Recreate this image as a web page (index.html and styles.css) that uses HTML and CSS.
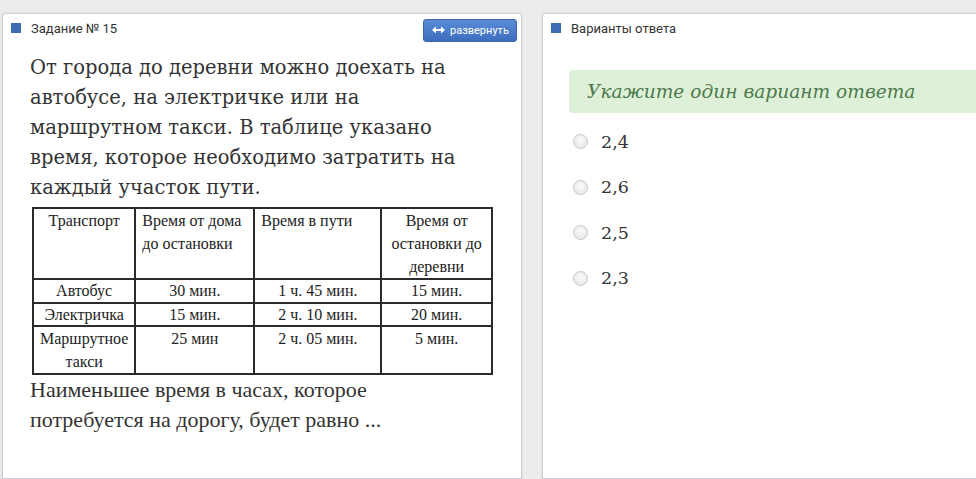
FILE: index.html
```html
<!DOCTYPE html>
<html lang="ru">
<head>
  <meta charset="UTF-8">
  <title>Задание № 15</title>
  <link rel="stylesheet" href="styles.css">
</head>
<body>

  <div class="page">

    <div class="panel task">
      <div class="panel-head">
        <span class="mark"></span>
        <span class="head-title">Задание № 15</span>
        <button class="expand-btn">
          <svg width="13" height="8" viewBox="0 0 13 8"><path d="M0 4 L4 0.5 V3 H9 V0.5 L13 4 L9 7.5 V5 H4 V7.5 Z" fill="#fff"/></svg>
          развернуть
        </button>
      </div>

      <div class="task-body">
        <p class="task-text">От города до деревни можно доехать на автобусе, на электричке или на маршрутном такси. В таблице указано время, которое необходимо затратить на каждый участок пути.</p>

        <table class="route-table">
          <tr class="head-row">
            <td class="c">Транспорт</td>
            <td>Время от дома до остановки</td>
            <td>Время в пути</td>
            <td class="c">Время от остановки до деревни</td>
          </tr>
          <tr class="c">
            <td>Автобус</td>
            <td>30 мин.</td>
            <td>1 ч. 45 мин.</td>
            <td>15 мин.</td>
          </tr>
          <tr class="c">
            <td>Электричка</td>
            <td>15 мин.</td>
            <td>2 ч. 10 мин.</td>
            <td>20 мин.</td>
          </tr>
          <tr class="c">
            <td>Маршрутное такси</td>
            <td>25 мин</td>
            <td>2 ч. 05 мин.</td>
            <td>5 мин.</td>
          </tr>
        </table>

        <p class="task-question">Наименьшее время в часах, которое потребуется на дорогу, будет равно ...</p>
      </div>
    </div>

    <div class="panel answers">
      <div class="panel-head">
        <span class="mark"></span>
        <span class="head-title">Варианты ответа</span>
      </div>

      <div class="answers-body">
        <div class="hint">Укажите один вариант ответа</div>

        <label class="option"><span class="radio"></span>2,4</label>
        <label class="option"><span class="radio"></span>2,6</label>
        <label class="option"><span class="radio"></span>2,5</label>
        <label class="option"><span class="radio"></span>2,3</label>
      </div>
    </div>

  </div>

</body>
</html>
```

FILE: styles.css
```css
body {
  margin: 0;
  background: #ececec;
  font-family: Roboto, "Liberation Sans", sans-serif;
  overflow: hidden;
}

.page {
  display: flex;
  gap: 20px;
  padding: 13px 0 0 2px;
  height: 479px;
  box-sizing: border-box;
}

.panel {
  background: #fff;
  border: 1px solid #c9ccd6;
  border-radius: 3px 3px 0 0;
  box-shadow: 0 0 2px rgba(0, 0, 0, 0.12);
  flex-shrink: 0;
}

.task {
  width: 518px;
}

.answers {
  width: 460px;
}

.panel-head {
  display: flex;
  align-items: center;
  height: 28px;
  padding: 0 4px 0 8px;
}

.mark {
  width: 10px;
  height: 10px;
  background: #3d6cb4;
  margin-right: 10px;
}

.head-title {
  font-size: 13px;
  color: #333;
}

.expand-btn {
  margin-left: auto;
  display: flex;
  align-items: center;
  gap: 5px;
  height: 23px;
  width: 94px;
  padding: 0 0 0 8px;
  margin-top: 4px;
  border: 1px solid #3a66ae;
  border-radius: 3px;
  background: linear-gradient(#5b8cd8, #3d6dbd);
  color: #fff;
  font-family: Roboto, "Liberation Sans", sans-serif;
  font-size: 11px;
}

.task-body {
  padding: 11px 0 0 27px;
  width: 445px;
}

.task-text {
  margin: 0;
  font-family: "DejaVu Serif", serif;
  font-size: 19.5px;
  line-height: 30px;
  color: #333;
}

.route-table {
  border-collapse: collapse;
  margin: 4px 0 0 2px;
  width: 461px;
  font-family: "Liberation Serif", serif;
  font-size: 16px;
  line-height: 23px;
  color: #222;
}

.route-table td {
  border: 2px solid #2b2b2b;
  vertical-align: top;
  padding: 0 6px;
}

.route-table tr.c td {
  text-align: center;
  line-height: 21.5px;
}

.route-table tr.c:last-child td {
  line-height: 23px;
}

.route-table td:nth-child(1) { width: 88px; }
.route-table td:nth-child(2) { width: 105px; }
.route-table td:nth-child(3) { width: 113px; }

.route-table .c {
  text-align: center;
}

.task-question {
  margin: 0;
  font-family: "Liberation Serif", serif;
  font-size: 22px;
  line-height: 30px;
  color: #333;
}

.answers-body {
  padding: 28px 0 0 26px;
}

.hint {
  background: #dff0d8;
  border-radius: 4px 0 0 4px;
  height: 43px;
  line-height: 43px;
  padding-left: 18px;
  font-family: "DejaVu Serif", serif;
  font-style: italic;
  font-size: 18.6px;
  color: #4c7a4c;
}

.option {
  display: flex;
  align-items: center;
  height: 45.5px;
  font-family: "DejaVu Serif", serif;
  font-size: 17.5px;
  color: #333;
}

.option:first-of-type {
  margin-top: 6px;
}

.radio {
  width: 13px;
  height: 13px;
  border: 1px solid #c8c8c8;
  border-radius: 50%;
  background: radial-gradient(circle at 50% 40%, #fafafa, #e2e2e2);
  margin: 0 13px 0 4px;
}
```
